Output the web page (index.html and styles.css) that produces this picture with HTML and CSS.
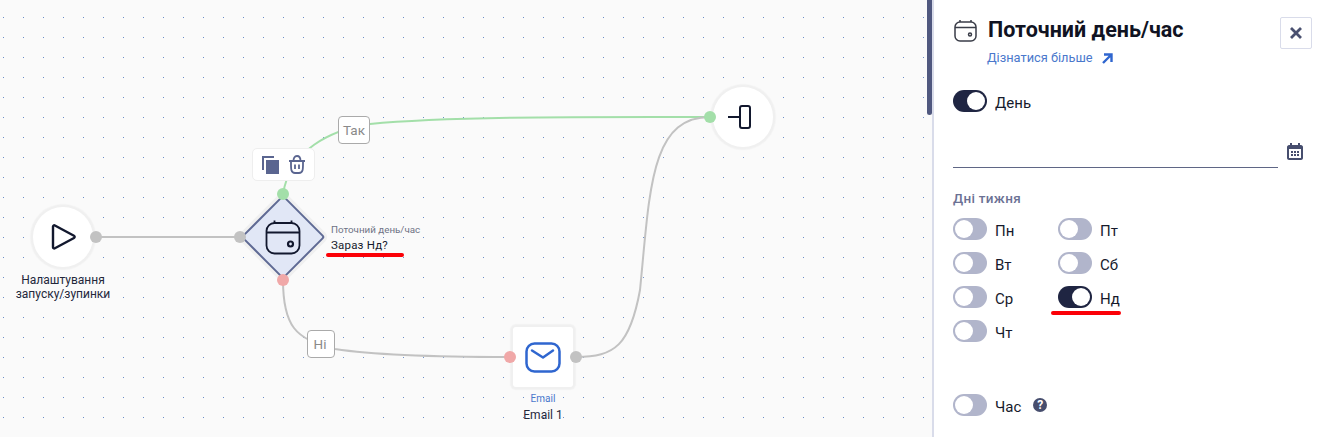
FILE: index.html
```html
<!DOCTYPE html>
<html lang="uk">
<head>
<meta charset="utf-8">
<title>Поточний день/час</title>
<link rel="stylesheet" href="styles.css">
</head>
<body>
<div class="app">
  <main class="canvas">
    <svg class="edges" width="927" height="437" viewBox="0 0 927 437" fill="none">
      <path d="M96 237H240" class="edge grey"/>
      <path d="M283 194C290 150 330 130 370 124C450 116 600 117 710 117" class="edge green"/>
      <path d="M283 280C283 325 295 340 335 349C380 356 450 357 510 357" class="edge grey"/>
      <path d="M576 357C615 357 630 345 640 290C650 190 650 117 710 117" class="edge grey"/>
    </svg>

    <div class="node circle start">
      <svg width="30" height="30" viewBox="0 0 30 30" fill="none"><path d="M5 4.6C5 3.6 6 3 6.900 3.500L26 13.700C26.900 14.200 26.900 15.500 26 16L6.900 26.300C6 26.800 5 26.200 5 25.200Z" stroke="#12182e" stroke-width="2.400" stroke-linejoin="round"/></svg>
    </div>
    <span class="port grey-port" style="left:90px;top:231px"></span>
    <div class="caption start-cap">Налаштування<br>запуску/зупинки</div>

    <div class="diamond"></div>
    <svg class="diamond-icon" width="36" height="36" viewBox="0 0 36 36" fill="none" stroke="#12182e" stroke-width="1.800"><rect x="1.500" y="4" width="33" height="30.500" rx="8"/><path d="M1.500 13.500H34.500M9.500 1.500V4M26.500 1.500V4"/><circle cx="25.500" cy="25" r="2.500" stroke-width="2.200"/></svg>
    <span class="port grey-port" style="left:234px;top:231px"></span>
    <span class="port green-port" style="left:277px;top:188px"></span>
    <span class="port red-port" style="left:277px;top:274px"></span>

    <div class="toolbar">
      <svg width="18" height="18" viewBox="0 0 18 18"><path d="M0 0H12V2H2V14H0Z M4 4H17V18H4Z" fill="#5a6590"/></svg>
      <svg width="18" height="19" viewBox="0 0 18 19" fill="none" stroke="#5a6590" stroke-width="1.800"><path d="M1 6H17M3 6C3 13 2.500 18 7 18H11C15.500 18 15 13 15 6M5.500 6C5.500 3 6.500 1 9 1C11.500 1 12.500 3 12.500 6M7 9.500V14M11 9.500V14"/></svg>
    </div>

    <div class="cond-label">
      <div class="cond-type">Поточний день/час</div>
      <div class="cond-name">Зараз Нд?</div>
    </div>
    <span class="underline cond-line"></span>

    <div class="edge-tag tag-yes">Так</div>
    <div class="edge-tag tag-no">Ні</div>

    <div class="node email">
      <svg width="36" height="31" viewBox="0 0 36 31" fill="none" stroke="#2f66cf" stroke-width="2.500" stroke-linecap="round" stroke-linejoin="round"><rect x="1.500" y="1.500" width="33" height="28" rx="8"/><path d="M7 8.500L18 15.500L28 8.500"/></svg>
    </div>
    <span class="port red-port" style="left:504px;top:351px"></span>
    <span class="port grey-port" style="left:570px;top:351px"></span>
    <div class="caption email-cap"><span class="email-type">Email</span><br>Email 1</div>

    <div class="node circle end">
      <svg class="end-icon" width="23" height="24" viewBox="0 0 23 24" fill="none" stroke="#12182e" stroke-width="2"><path d="M0 12H12"/><rect x="12" y="1" width="10" height="22" rx="2"/></svg>
    </div>
    <span class="port green-port" style="left:704px;top:111px"></span>
    <div class="scrollbar"></div>
  </main>

  <aside class="panel">
    <header class="head">
      <svg class="head-icon" width="23" height="23" viewBox="0 0 23 23" fill="none" stroke="#3a3d48" stroke-width="1.500"><rect x="1" y="3" width="21" height="19" rx="5"/><path d="M1 8.500H22M6 1V3M17 1V3"/><circle cx="16" cy="15.500" r="1.500"/></svg>
      <div class="head-text">
        <h1 class="title">Поточний день/час</h1>
        <a class="more" href="#">Дізнатися більше
          <svg width="11" height="11" viewBox="0 0 11 11" fill="none" stroke="#2f66cf" stroke-width="2.400"><path d="M1 10L9.500 1.500M2 1.500H9.500V9"/></svg>
        </a>
      </div>
      <button class="close" type="button" aria-label="Закрити">
        <svg width="12" height="12" viewBox="0 0 12 12" fill="none" stroke="#4a5170" stroke-width="2.800"><path d="M1 1L11 11M11 1L1 11"/></svg>
      </button>
    </header>

    <label class="row day-row"><span class="toggle on"></span><span class="row-label">День</span></label>

    <div class="field-row">
      <div class="field"></div>
      <svg class="cal-icon" width="16" height="17" viewBox="0 0 16 17"><path fill-rule="evenodd" d="M3 0H5V2H11V0H13V2H14C15 2 16 3 16 4V15C16 16 15 17 14 17H2C1 17 0 16 0 15V4C0 3 1 2 2 2H3ZM2 6V15H14V6ZM4 8H6V10H4ZM7 8H9V10H7ZM10 8H12V10H10ZM4 11H6V13H4ZM7 11H9V13H7ZM10 11H12V13H10Z" fill="#474e6e"/></svg>
    </div>

    <div class="section">Дні тижня</div>
    <div class="days">
      <label class="row"><span class="toggle"></span><span class="row-label">Пн</span></label>
      <label class="row"><span class="toggle"></span><span class="row-label">Вт</span></label>
      <label class="row"><span class="toggle"></span><span class="row-label">Ср</span></label>
      <label class="row"><span class="toggle"></span><span class="row-label">Чт</span></label>
      <label class="row"><span class="toggle"></span><span class="row-label">Пт</span></label>
      <label class="row"><span class="toggle"></span><span class="row-label">Сб</span></label>
      <label class="row sunday"><span class="toggle on"></span><span class="row-label">Нд</span><span class="underline day-line"></span></label>
    </div>

    <label class="row hour-row"><span class="toggle"></span><span class="row-label">Час</span><span class="help">?</span></label>
  </aside>
</div>
</body>
</html>
```
FILE: styles.css
```css
* { box-sizing: border-box; }
html, body { margin: 0; height: 100%; overflow: hidden; }
body { font-family: Roboto, "Noto Sans", "Liberation Sans", sans-serif; color: #161a2c; background: #fff; }
.app { display: flex; width: 1318px; height: 437px; }

.canvas {
  position: relative;
  flex: 0 0 932px;
  background-color: #fafafa;
  background-image: radial-gradient(circle at 0.5px 0.5px, #6d8fc7 0.7px, transparent 0.7px);
  background-size: 20px 20px;
  background-position: 3px 17px;
  overflow: hidden;
}
.edges { position: absolute; left: 0; top: 0; }
.edge { stroke-width: 2; }
.edge.grey { stroke: #c2c2c2; }
.edge.green { stroke: #a3dfa9; }

.node { position: absolute; display: flex; align-items: center; justify-content: center; background: #fff; }
.circle { width: 60px; height: 60px; border-radius: 50%; box-shadow: 0 0 0 2px #f0f0f0, 0 0 1px 3px #f2f2f2; }
.start { left: 33px; top: 207px; }
.end { left: 713px; top: 87px; }
.end-icon { margin-right: 8px; }
.email { left: 513px; top: 327px; width: 60px; height: 60px; border-radius: 3px; box-shadow: 0 0 0 2px #f0f0f0, 0 0 1px 3px #f2f2f2; }

.port { position: absolute; width: 12px; height: 12px; border-radius: 50%; }
.grey-port { background: #c2c2c2; }
.green-port { background: #a3dfa9; }
.red-port { background: #f0a8a8; }

.diamond {
  position: absolute; left: 253px; top: 207px; width: 60px; height: 60px;
  transform: rotate(45deg);
  background: #e1e7f6;
  border: 2px solid #5f6a94;
  border-radius: 3px;
  box-shadow: 0 0 0 3px #f0f0f0;
}
.diamond-icon { position: absolute; left: 265px; top: 219px; }

.toolbar {
  position: absolute; left: 252px; top: 148px; width: 63px; height: 33px;
  display: flex; align-items: center; justify-content: center; gap: 8px;
  background: #fff; border: 1px solid #eeeeee; border-radius: 5px;
}

.caption { position: absolute; text-align: center; font-size: 12px; line-height: 14px; color: #23273a; }
.start-cap { left: 3px; top: 273px; width: 120px; }
.email-cap { left: 493px; top: 390px; width: 100px; line-height: 16px; }
.email-type { font-size: 10px; color: #4a78cc; }

.cond-label { position: absolute; left: 331px; top: 223px; }
.cond-type { font-size: 9.800px; line-height: 14px; color: #6e7285; }
.cond-name { font-size: 11.500px; line-height: 16px; color: #161a2c; letter-spacing: 0.2px; }

.underline { position: absolute; height: 4px; border-radius: 2px; background: #fb0007; }
.cond-line { left: 326px; top: 253px; width: 78px; }

.edge-tag {
  position: absolute; display: flex; align-items: center; justify-content: center;
  background: #fff; border: 1px solid #aaaaaa; border-radius: 4px;
  font-size: 13.500px; color: #8a8a8a;
}
.tag-yes { left: 338px; top: 116px; width: 32px; height: 28px; }
.tag-no { left: 307px; top: 330px; width: 28px; height: 28px; padding-right: 2px; }

.scrollbar { position: absolute; left: 927px; top: 0; width: 5px; height: 115px; background: #50587f; border-radius: 0 0 3px 3px; }

.panel { flex: 1; border-left: 2px solid #d9dcea; padding: 17px 6px 0 19px; background: #fff; }
.head { display: flex; align-items: flex-start; }
.head-icon { margin: 2px 11px 0 1px; flex: none; }
.head-text { flex: 1; }
.title { margin: 0; font-size: 21.500px; line-height: 26px; font-weight: 700; color: #101322; }
.more { display: flex; align-items: center; gap: 9px; margin-top: 7px; margin-left: -1px; font-size: 12.800px; line-height: 16px; color: #4a78cc; text-decoration: none; }
.close {
  flex: none; width: 32px; height: 32px; padding: 0; display: flex; align-items: center; justify-content: center;
  background: #fff; border: 1px solid #d9dcea; border-radius: 2px;
}

.row { position: relative; display: flex; align-items: center; gap: 8px; height: 22px; }
.row-label { font-size: 15px; color: #161a2c; position: relative; top: 2px; }
.toggle { position: relative; flex: none; width: 34px; height: 22px; border-radius: 11px; background: #b1b5cb; }
.toggle::after { content: ""; position: absolute; left: 2px; top: 2px; width: 18px; height: 18px; border-radius: 50%; background: #fff; }
.toggle.on { background: #1f2542; }
.toggle.on::after { left: 14px; }

.day-row { margin-top: 24px; }

.field-row { display: flex; align-items: flex-start; gap: 9px; margin-top: 29px; height: 27px; }
.field { width: 325px; height: 27px; border-bottom: 1px solid #5f6685; }
.cal-icon { margin-top: 2px; }

.section { margin-top: 21px; font-size: 13.500px; line-height: 18px; letter-spacing: 0.3px; font-weight: 500; color: #6b7194; }

.days {
  display: grid; grid-template-rows: repeat(4, 22px); grid-auto-flow: column; grid-template-columns: 105px 105px;
  row-gap: 12px; margin-top: 11px;
}
.day-line { left: -7px; top: 25px; width: 70px; }

.hour-row { margin-top: 52px; }
.help {
  display: flex; align-items: center; justify-content: center; width: 14px; height: 14px; margin: -1px 0 0 4px;
  border-radius: 50%; background: #474e6e; color: #fff; font-size: 12px; font-weight: 700;
}
```
